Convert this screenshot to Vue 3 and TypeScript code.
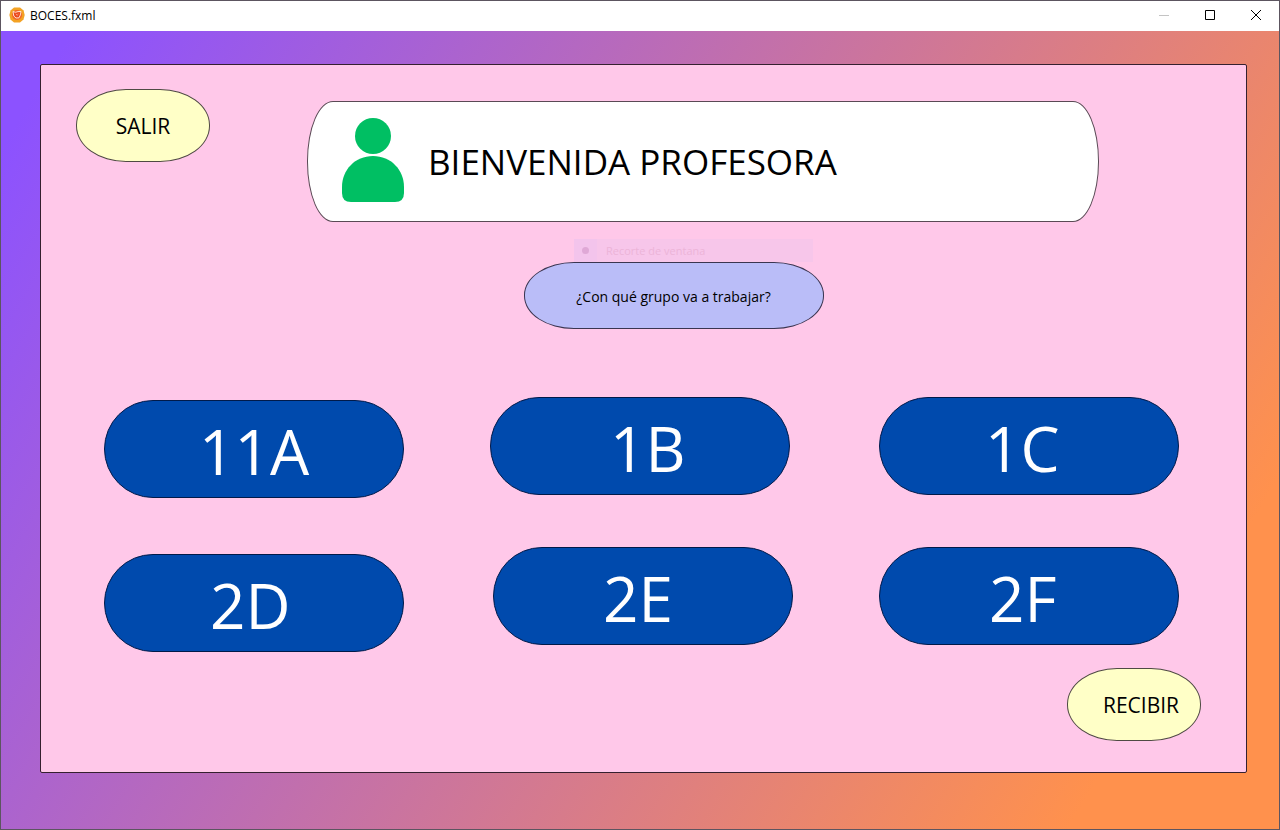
<script setup lang="ts">
import { ref } from 'vue'

interface Group {
  id: string
  indent: 'xs' | 's' | 'm' | 'l'
}

const columns: Group[][] = [
  [{ id: '11A', indent: 'xs' }, { id: '2D', indent: 's' }],
  [{ id: '1B', indent: 'l' }, { id: '2E', indent: 'm' }],
  [{ id: '1C', indent: 's' }, { id: '2F', indent: 'm' }],
]

const selected = ref<string | null>(null)
</script>

<template>
  <div class="window">
    <header class="titlebar">
      <svg class="app-icon" viewBox="0 0 16 16" aria-hidden="true">
        <path d="M5 .6 11 .5 14.600 3.500 15.700 8 14.500 12.600 11 15.500 5 15.500 1.500 12.600 .4 8 1.500 3.500Z" fill="#f3a224" />
        <circle cx="8" cy="8" r="5" fill="#f0652a" />
        <path d="M4 4.500 6.500 5.300 9 4.600 12 4.500 11.300 8 10 10.800 7 11 4.800 9Z" fill="#ea4a1f" stroke="#ffe1cf" stroke-width="1" />
        <path d="M6.800 7 8.200 8.200 9.400 7" fill="none" stroke="#ffb79a" stroke-width=".8" />
      </svg>
      <span class="title">BOCES.fxml</span>
      <div class="controls">
        <button type="button" class="control" aria-label="Minimizar" disabled>
          <svg viewBox="0 0 12 12"><path d="M1 6.500H11" stroke="#c4c4c4" /></svg>
        </button>
        <button type="button" class="control" aria-label="Maximizar">
          <svg viewBox="0 0 12 12"><path d="M1.500 1.500H10.500V10.500H1.500Z" fill="none" stroke="#000" /></svg>
        </button>
        <button type="button" class="control" aria-label="Cerrar">
          <svg viewBox="0 0 12 12"><path d="M1 1 11 11M11 1 1 11" stroke="#000" /></svg>
        </button>
      </div>
    </header>

    <main class="backdrop">
      <section class="panel">
        <div class="top">
          <button type="button" class="pill">SALIR</button>
          <div class="banner">
            <svg class="avatar" viewBox="0 0 64 84" aria-hidden="true">
              <circle cx="32" cy="18" r="18" fill="#00bf63" />
              <path d="M32 38C50 38 63 52 63 69V75Q63 84 54 84H10Q1 84 1 75V69C1 52 14 38 32 38Z" fill="#00bf63" />
            </svg>
            <h1>BIENVENIDA PROFESORA</h1>
          </div>
        </div>

        <div class="prompt">
          <div class="ghost"><span class="ghost-icon"><i></i></span>Recorte de ventana</div>
          <p class="question">¿Con qué grupo va a trabajar?</p>
        </div>

        <div class="groups">
          <div v-for="(column, i) in columns" :key="i" class="column">
            <button
              v-for="group in column"
              :key="group.id"
              type="button"
              class="group"
              :class="'indent-' + group.indent"
              @click="selected = group.id"
            >{{ group.id }}</button>
          </div>
        </div>

        <div class="bottom">
          <button type="button" class="pill receive">RECIBIR</button>
        </div>
      </section>
    </main>
  </div>
</template>

<style>
body {
  margin: 0;
}
</style>

<style scoped>
.window {
  box-sizing: border-box;
  min-height: 100vh;
  display: flex;
  flex-direction: column;
  border: 1px solid #5c5560;
  font-family: "Segoe UI", "Open Sans", "Noto Sans", sans-serif;
  color: #000;
}
button {
  font-family: inherit;
  color: inherit;
  margin: 0;
}
.titlebar {
  box-sizing: border-box;
  display: flex;
  align-items: center;
  height: 30px;
  padding: 0 0 2px 8px;
  background: #fff;
}
.app-icon {
  width: 16px;
  height: 16px;
}
.title {
  margin-left: 5px;
  font-size: 12px;
}
.controls {
  display: flex;
  margin-left: auto;
}
.control {
  display: flex;
  align-items: center;
  justify-content: center;
  width: 46px;
  height: 28px;
  padding: 0;
  border: 0;
  background: none;
}
.control svg {
  width: 12px;
  height: 12px;
}
.backdrop {
  flex: 1;
  display: flex;
  padding: 33px 32px 56px 39px;
  background: linear-gradient(121deg, #8c52ff 4%, #ff914d 88%);
}
.panel {
  box-sizing: border-box;
  flex: 1;
  min-width: 0;
  border: 1px solid #35202f;
  border-radius: 2px;
  background: #ffc8e9;
}
.top {
  display: flex;
  align-items: flex-start;
  gap: 97px;
  padding: 24px 147px 0 35px;
}
.pill {
  box-sizing: border-box;
  flex: none;
  width: 134px;
  height: 73px;
  padding: 0;
  border: 1px solid #4f4a44;
  border-radius: 50px / 36px;
  background: #ffffc7;
  font-size: 21px;
}
.banner {
  box-sizing: border-box;
  flex: 1;
  display: flex;
  align-items: center;
  gap: 23px;
  height: 121px;
  margin-top: 12px;
  padding-left: 33px;
  border: 1px solid #5a4a55;
  border-radius: 26px / 60px;
  background: #fff;
}
.avatar {
  flex: none;
  width: 64px;
  height: 84px;
  margin-bottom: 4px;
}
h1 {
  margin: 0;
  font-size: 35px;
  font-weight: 400;
  line-height: 48px;
}
.prompt {
  display: flex;
  flex-direction: column;
  align-items: center;
  padding: 17px 0 0 60px;
}
.ghost {
  display: flex;
  align-items: center;
  gap: 9px;
  width: 239px;
  height: 23px;
  margin-left: 40px;
  background: #f7c6ea;
  color: #ecb4d8;
  font-size: 11px;
}
.ghost-icon {
  display: flex;
  align-items: center;
  justify-content: center;
  width: 23px;
  height: 23px;
  background: #f3c4ec;
}
.ghost-icon i {
  width: 7px;
  height: 7px;
  border-radius: 50%;
  background: #dfa8d6;
}
.question {
  box-sizing: border-box;
  display: flex;
  align-items: center;
  justify-content: center;
  width: 300px;
  height: 67px;
  margin: 0;
  padding-top: 1px;
  border: 1px solid #3a3550;
  border-radius: 50px / 33px;
  background: #babdf8;
  font-size: 14px;
}
.groups {
  display: grid;
  grid-template-columns: 300fr 303fr 300fr;
  column-gap: 86px;
  padding: 68px 67px 0 63px;
}
.column {
  display: flex;
  flex-direction: column;
  gap: 52px;
}
.column:first-child {
  gap: 56px;
  padding-top: 3px;
}
.group {
  box-sizing: border-box;
  width: 100%;
  height: 98px;
  padding: 4px 0 0;
  border: 1px solid #001a4a;
  border-radius: 49px;
  background: #004aad;
  color: #fff;
  font-size: 62px;
  line-height: 88px;
  text-align: left;
}
.column:nth-child(2) .group {
  width: 99%;
}
.column:nth-child(2) .group:last-child {
  align-self: flex-end;
}
.indent-xs {
  padding-left: 94px;
}
.indent-s {
  padding-left: 105px;
}
.indent-m {
  padding-left: 109px;
}
.indent-l {
  padding-left: 119px;
}
.bottom {
  display: flex;
  justify-content: flex-end;
  padding: 16px 45px 30px;
}
.receive {
  padding-left: 14px;
}
</style>
